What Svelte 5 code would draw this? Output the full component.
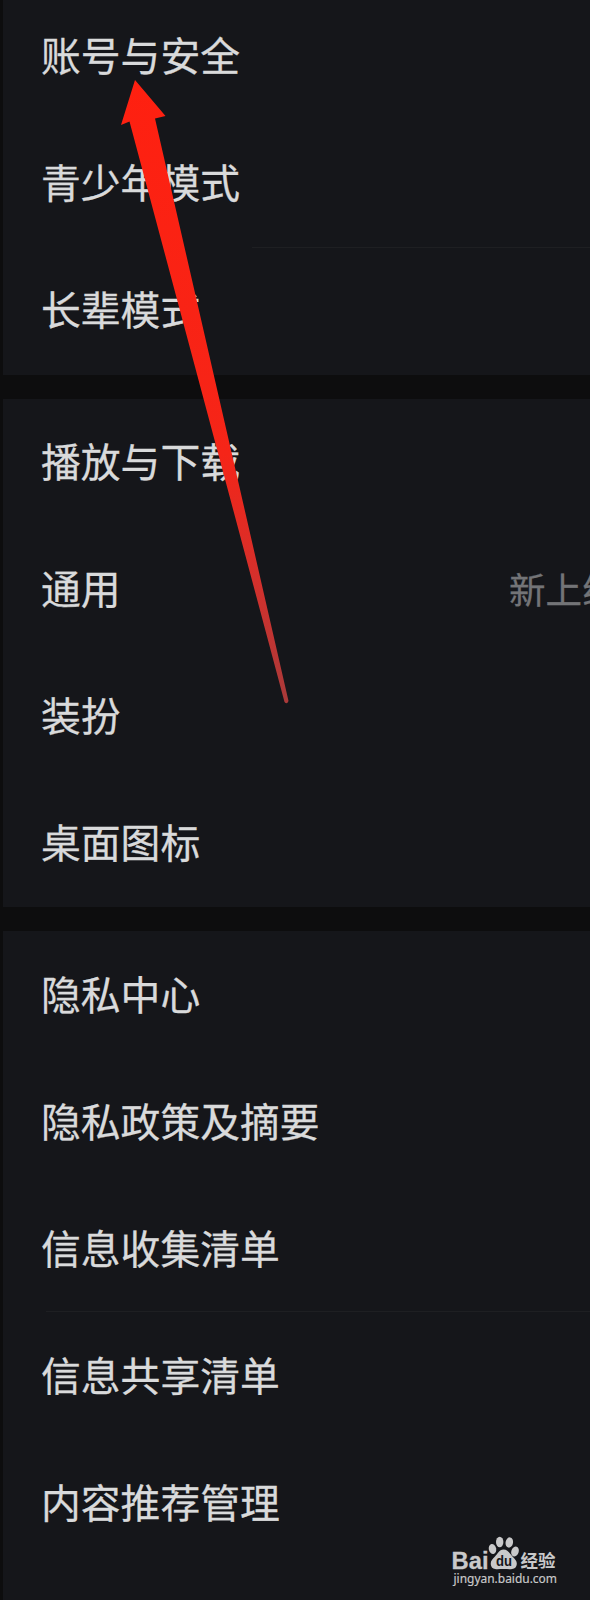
<script lang="ts">
	interface Item {
		label: string;
		note?: string;
		line?: 'half' | 'full';
	}

	const groups: Item[][] = [
		[
			{ label: '账号与安全' },
			{ label: '青少年模式', line: 'half' },
			{ label: '长辈模式' }
		],
		[
			{ label: '播放与下载' },
			{ label: '通用', note: '新上线' },
			{ label: '装扮' },
			{ label: '桌面图标' }
		],
		[
			{ label: '隐私中心' },
			{ label: '隐私政策及摘要' },
			{ label: '信息收集清单', line: 'full' },
			{ label: '信息共享清单' },
			{ label: '内容推荐管理' }
		]
	];
</script>

<main class="settings">
	{#each groups as group}
		<ul class="group">
			{#each group as item (item.label)}
				<li class="item">
					<div class="row">
						<span class="label">{item.label}</span>
						{#if item.note}
							<span class="note">{item.note}</span>
						{/if}
					</div>
					<div class="line {item.line ?? 'none'}"></div>
				</li>
			{/each}
		</ul>
	{/each}

	<!-- Pointer to the account row -->
	<svg class="arrow" width="190" height="640" viewBox="110 75 190 640" aria-hidden="true">
		<defs>
			<linearGradient id="arrow-fill" gradientUnits="userSpaceOnUse" x1="0" y1="80" x2="0" y2="704">
				<stop offset="0" stop-color="#ff2010" />
				<stop offset="0.6" stop-color="#f52518" />
				<stop offset="0.8" stop-color="#d4302c" />
				<stop offset="1" stop-color="#a93a3a" />
			</linearGradient>
		</defs>
		<path d="M135 80L165.500 116L155 118.500L288.500 701Q287 705 284.500 702L129.500 121.500L121 125Z" fill="url(#arrow-fill)" />
	</svg>

	<svg class="watermark" width="120" height="60" viewBox="445 1530 120 60" fill="#c9c9ca">
		<text x="451.500" y="1568.700" class="brand" textLength="37" lengthAdjust="spacingAndGlyphs">Bai</text>
		<ellipse cx="492.500" cy="1549" rx="3.700" ry="5" transform="rotate(-12 492.500 1549)" />
		<ellipse cx="499.700" cy="1542" rx="3.700" ry="5.200" />
		<ellipse cx="509.300" cy="1542.500" rx="3.700" ry="5.200" transform="rotate(10 509.300 1542.500)" />
		<ellipse cx="515" cy="1551.500" rx="3.700" ry="5" transform="rotate(20 515 1551.500)" />
		<path d="M503.500 1549.500C508 1549.500 509.500 1553.500 512.500 1556.500C516 1560 517.500 1562 516.500 1565.500C515 1570.500 509.500 1569 503.500 1569C497.500 1569 492.500 1570.500 491 1565.500C490 1561.500 492 1559.500 495 1556.500C498 1553.500 499 1549.500 503.500 1549.500Z" />
		<text x="496" y="1566" class="du" textLength="16" lengthAdjust="spacingAndGlyphs">du</text>
		<text x="520.500" y="1567" class="cn" textLength="35">经验</text>
		<text x="453.500" y="1582.700" class="url" textLength="103.500" lengthAdjust="spacingAndGlyphs">jingyan.baidu.com</text>
	</svg>
</main>

<style>
	:global(body) {
		margin: 0;
		background: #0d0d0e;
	}

	.settings {
		position: relative;
		box-sizing: border-box;
		width: 590px;
		height: 1600px;
		padding-left: 3px;
		overflow: hidden;
		display: flex;
		flex-direction: column;
		gap: 24px;
		background: #0d0d0e;
		font-family: 'Noto Sans CJK SC', sans-serif;
	}

	.group {
		flex: none;
		margin: 0;
		padding: 0;
		list-style: none;
		background: #15161a;
	}

	.group:last-of-type {
		flex: 1;
	}

	.item {
		display: flex;
		flex-direction: column;
		height: 127px;
	}

	.row {
		flex: 1;
		display: flex;
		align-items: center;
		justify-content: space-between;
		padding: 0 0 4px 38px;
		white-space: nowrap;
		overflow: hidden;
	}

	.group:first-child .row {
		padding-bottom: 6px;
	}

	.group:last-of-type .row {
		padding-bottom: 3px;
	}

	/* the list is scrolled a little past its top */
	.group:first-child .item:first-child {
		height: 121px;
	}

	.group:first-child .item:first-child .row {
		padding-bottom: 12px;
	}

	.label {
		font-size: 39.8px;
		line-height: 60px;
		color: #d9dadb;
		-webkit-text-stroke: 0.3px #d9dadb;
	}

	.note {
		width: 81px;
		padding-top: 3px;
		font-size: 36.5px;
		line-height: 60px;
		color: #737477;
		-webkit-text-stroke: 0.3px #737477;
	}

	.line {
		height: 1px;
		margin-left: 43px;
		background: #1e1f22;
	}

	.line.half {
		margin-left: 249px;
	}

	.line.none {
		background: transparent;
	}

	.arrow {
		position: absolute;
		left: 110px;
		top: 75px;
	}

	.watermark {
		position: absolute;
		left: 445px;
		top: 1530px;
	}

	.brand {
		font: bold 24.5px 'Liberation Sans', sans-serif;
		stroke: #c9c9ca;
		stroke-width: 0.3px;
	}

	.du {
		font: bold 14px 'Liberation Sans', sans-serif;
		fill: #15161a;
	}

	.cn {
		font: bold 17.500px 'Noto Sans CJK SC', sans-serif;
	}

	.url {
		font: 13.2px 'Noto Sans', sans-serif;
		stroke: #c9c9ca;
		stroke-width: 0.2px;
	}
</style>
